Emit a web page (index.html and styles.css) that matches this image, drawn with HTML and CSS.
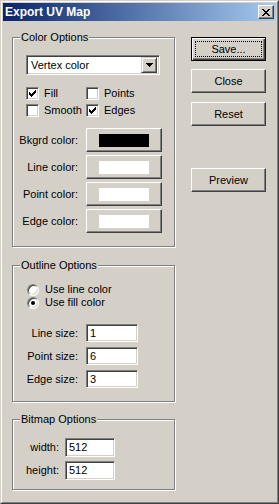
FILE: index.html
```html
<!DOCTYPE html>
<html lang="en">
<head>
    <meta charset="UTF-8">
    <title>Export UV Map</title>
    <link rel="stylesheet" href="styles.css">
</head>
<body>
    <div class="window">
        <div class="frame">
            <div class="titlebar">
                <span class="title">Export UV Map</span>
                <div class="close-btn">
                    <svg width="8" height="7" viewBox="0 0 8 7" shape-rendering="crispEdges">
                        <path d="M0 0h2v1H0zM6 0h2v1H6zM1 1h2v1H1zM5 1h2v1H5zM2 2h4v1H2zM3 3h2v1H3zM2 4h4v1H2zM1 5h2v1H1zM5 5h2v1H5zM0 6h2v1H0zM6 6h2v1H6z" fill="#000"/>
                    </svg>
                </div>
            </div>

            <div class="content">
                <div class="left-col">
                    <!-- Color options -->
                    <div class="group group-color">
                        <div class="group-title">Color Options</div>
                        <div class="select">
                            <span class="select-text">Vertex color</span>
                            <span class="select-arrow">
                                <svg width="7" height="4" viewBox="0 0 7 4" shape-rendering="crispEdges">
                                    <path d="M0 0h7v1H0zM1 1h5v1H1zM2 2h3v1H2zM3 3h1v1H3z" fill="#000"/>
                                </svg>
                            </span>
                        </div>
                        <div class="checks">
                            <div class="check"><span class="box checked"></span>Fill</div>
                            <div class="check"><span class="box"></span>Points</div>
                            <div class="check"><span class="box"></span>Smooth</div>
                            <div class="check"><span class="box checked"></span>Edges</div>
                        </div>
                        <div class="color-rows">
                            <span class="label">Bkgrd color:</span>
                            <div class="btn color-btn"><span class="swatch swatch-black"></span></div>
                            <span class="label">Line color:</span>
                            <div class="btn color-btn"><span class="swatch"></span></div>
                            <span class="label">Point color:</span>
                            <div class="btn color-btn"><span class="swatch"></span></div>
                            <span class="label">Edge color:</span>
                            <div class="btn color-btn"><span class="swatch"></span></div>
                        </div>
                    </div>

                    <!-- Outline options -->
                    <div class="group group-outline">
                        <div class="group-title">Outline Options</div>
                        <div class="radios">
                            <div class="radio-row"><span class="radio"></span>Use line color</div>
                            <div class="radio-row"><span class="radio selected"></span>Use fill color</div>
                        </div>
                        <div class="size-rows">
                            <span class="label">Line size:</span>
                            <div class="field">1</div>
                            <span class="label">Point size:</span>
                            <div class="field">6</div>
                            <span class="label">Edge size:</span>
                            <div class="field">3</div>
                        </div>
                    </div>

                    <!-- Bitmap options -->
                    <div class="group group-bitmap">
                        <div class="group-title">Bitmap Options</div>
                        <div class="bitmap-rows">
                            <span class="label">width:</span>
                            <div class="field">512</div>
                            <span class="label">height:</span>
                            <div class="field">512</div>
                        </div>
                    </div>
                </div>

                <div class="right-col">
                    <div class="btn btn-default"><span class="focus">Save...</span></div>
                    <div class="btn btn-close">Close</div>
                    <div class="btn btn-reset">Reset</div>
                    <div class="btn btn-preview">Preview</div>
                </div>
            </div>
        </div>
    </div>
</body>
</html>
```

FILE: styles.css
```css
* {
    margin: 0;
    padding: 0;
    box-sizing: border-box;
}

body {
    font-family: 'Liberation Sans', Arial, sans-serif;
    font-size: 11px;
    line-height: 13px;
    color: #000;
    background: #D4D0C8;
}

.window {
    width: 279px;
    height: 504px;
    border: 1px solid;
    border-color: #D4D0C8 #404040 #404040 #D4D0C8;
}

.frame {
    height: 100%;
    border: 1px solid;
    border-color: #fff #808080 #808080 #fff;
    padding: 1px;
    background: #D4D0C8;
}

/* title bar */
.titlebar {
    height: 18px;
    display: flex;
    align-items: center;
    justify-content: space-between;
    padding: 0 2px;
    background: linear-gradient(to right, #0A246A, #A6CAF0);
}

.title {
    color: #fff;
    font-weight: bold;
    font-size: 12px;
}

.close-btn {
    width: 16px;
    height: 14px;
    display: flex;
    align-items: center;
    justify-content: center;
    background: #D4D0C8;
    border: 1px solid;
    border-color: #fff #404040 #404040 #fff;
    box-shadow: inset -1px -1px #808080;
}

.content {
    display: flex;
    padding: 16px 0 0 9px;
    gap: 15px;
}

.left-col {
    width: 164px;
}

/* group boxes */
.group {
    position: relative;
    width: 163px;
    border: 1px solid #808080;
    box-shadow: inset 1px 1px #fff, 1px 1px #fff;
}

.group-title {
    position: absolute;
    top: -7px;
    left: 7px;
    padding: 0 1px;
    background: #D4D0C8;
}

.group-color {
    height: 210px;
    padding-top: 17px;
}

.group-outline {
    height: 137px;
    margin-top: 18px;
    padding-top: 17px;
}

.group-bitmap {
    height: 71px;
    margin-top: 17px;
    padding-top: 18px;
}

/* dropdown */
.select {
    margin-left: 13px;
    width: 134px;
    height: 20px;
    display: flex;
    align-items: center;
    justify-content: space-between;
    background: #fff;
    border: 1px solid;
    border-color: #808080 #fff #fff #808080;
    box-shadow: inset 1px 1px #404040, inset -1px -1px #D4D0C8;
    padding: 2px 2px 2px 4px;
}

.select-arrow {
    width: 16px;
    height: 16px;
    display: flex;
    align-items: center;
    justify-content: center;
    background: #D4D0C8;
    border: 1px solid;
    border-color: #D4D0C8 #404040 #404040 #D4D0C8;
    box-shadow: inset 1px 1px #fff, inset -1px -1px #808080;
}

/* checkboxes */
.checks {
    margin: 12px 0 0 13px;
    display: grid;
    grid-template-columns: 60px auto;
    row-gap: 4px;
}

.check {
    display: flex;
    align-items: center;
    height: 13px;
    gap: 5px;
}

.box {
    width: 13px;
    height: 13px;
    background: #fff;
    border: 1px solid;
    border-color: #808080 #fff #fff #808080;
    box-shadow: inset 1px 1px #404040, inset -1px -1px #D4D0C8;
}

.box.checked {
    background: #fff url("data:image/svg+xml,%3Csvg xmlns='http://www.w3.org/2000/svg' width='7' height='7' shape-rendering='crispEdges'%3E%3Cpath d='M6 0h1v1H6zM5 1h2v1H5zM0 2h1v1H0zM4 2h3v1H4zM0 3h2v1H0zM3 3h3v1H3zM0 4h5v1H0zM1 5h3v1H1zM2 6h1v1H2z'/%3E%3C/svg%3E") no-repeat 2px 2px;
}

/* buttons */
.btn {
    width: 75px;
    height: 24px;
    display: flex;
    align-items: center;
    justify-content: center;
    background: #D4D0C8;
    border: 1px solid;
    border-color: #fff #404040 #404040 #fff;
    box-shadow: inset -1px -1px #808080;
}

.color-rows {
    margin-top: 11px;
    display: grid;
    grid-template-columns: 65px 76px;
    column-gap: 8px;
    row-gap: 3px;
    align-items: center;
}

.label {
    text-align: right;
}

.color-btn {
    width: 76px;
}

.swatch {
    width: 50px;
    height: 13px;
    background: #fff;
}

.swatch-black {
    background: #000;
}

/* radios */
.radios {
    margin-left: 14px;
}

.radio-row {
    display: flex;
    align-items: center;
    gap: 6px;
    height: 13px;
}

.radio {
    position: relative;
    width: 12px;
    height: 12px;
    border-radius: 50%;
    background: #fff;
    border: 1px solid;
    border-color: #808080 #fff #fff #808080;
    box-shadow: inset 1px 1px #404040, inset -1px -1px #D4D0C8;
}

.radio.selected::after {
    content: '';
    position: absolute;
    top: 3px;
    left: 3px;
    width: 4px;
    height: 4px;
    border-radius: 50%;
    background: #000;
}

/* text fields */
.field {
    height: 18px;
    background: #fff;
    border: 1px solid;
    border-color: #808080 #fff #fff #808080;
    box-shadow: inset 1px 1px #404040, inset -1px -1px #D4D0C8;
    padding: 2px 0 0 3px;
}

.size-rows {
    margin-top: 15px;
    display: grid;
    grid-template-columns: 65px 52px;
    column-gap: 8px;
    row-gap: 5px;
    align-items: center;
}

.bitmap-rows {
    display: grid;
    grid-template-columns: 46px 50px;
    column-gap: 6px;
    row-gap: 4px;
    align-items: center;
}

.bitmap-rows .field {
    height: 19px;
}

/* right column */
.right-col {
    display: flex;
    flex-direction: column;
}

.btn-default {
    border: 1px solid #000;
    box-shadow: inset 1px 1px #fff, inset -1px -1px #404040, inset -2px -2px #808080;
    padding: 3px;
}

.focus {
    width: 100%;
    height: 100%;
    display: flex;
    align-items: center;
    justify-content: center;
    border: 1px dotted #000;
}

.btn-close {
    margin-top: 8px;
}

.btn-reset {
    margin-top: 9px;
}

.btn-preview {
    margin-top: 42px;
}
```
